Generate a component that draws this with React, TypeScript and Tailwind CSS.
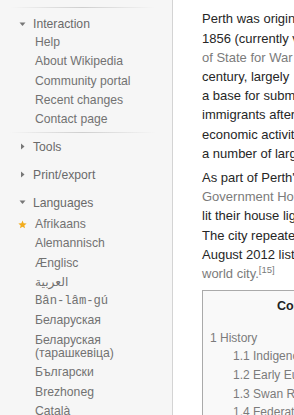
import React from "react";

const Down = () => (
  <svg width="7" height="7" viewBox="0 0 7 7" className="mr-[7px] shrink-0">
    <polygon points="0.5,1.5 6.5,1.5 3.5,5" fill="#777" />
  </svg>
);

const Right = () => (
  <svg width="7" height="7" viewBox="0 0 7 7" className="mr-[7px] shrink-0">
    <polygon points="2,0.5 5.5,3.5 2,6.5" fill="#777" />
  </svg>
);

const Sep = () => (
  <div className="h-px ml-[10px] w-[145px] bg-linear-to-r from-[#f6f6f6] via-[#cfcfcf] to-[#f6f6f6]" />
);

function Heading({ open, label }: { open?: boolean; label: string }) {
  return (
    <div className="flex items-center h-[16px] pl-[19px] text-[12.2px] text-[#6a6a6a]">
      {open ? <Down /> : <Right />}
      {label}
    </div>
  );
}

function Item({ children, className = "" }: { children: React.ReactNode; className?: string }) {
  return (
    <div className={`pl-[35px] pr-2 py-[3px] leading-[13.3px] text-[12.2px] text-[#727272] ${className}`}>
      {children}
    </div>
  );
}

const interaction = ["Help", "About Wikipedia", "Community portal", "Recent changes", "Contact page"];

function Sidebar() {
  return (
    <div className="w-[173px] shrink-0 bg-[#f6f6f6] border-r border-[#d4d4d4] flex flex-col">
      <div className="mt-[7px]">
        <Sep />
      </div>
      <div className="mt-[8px]">
        <Heading open label="Interaction" />
      </div>
      <div className="mt-px">
        {interaction.map((t) => (
          <Item key={t}>{t}</Item>
        ))}
      </div>
      <div className="mt-[2.5px]">
        <Sep />
      </div>
      <div className="mt-[6px] mb-[7px]">
        <Heading label="Tools" />
      </div>
      <Sep />
      <div className="mt-[5px] mb-[6px]">
        <Heading label="Print/export" />
      </div>
      <Sep />
      <div className="mt-[6px] mb-[4px]">
        <Heading open label="Languages" />
      </div>
      <div className="relative">
        <svg width="9" height="9" viewBox="0 0 24 24" className="absolute left-[18px] top-[5px]">
          <polygon
            points="12,1.5 15,8.8 23,9.3 16.9,14.5 18.8,22.3 12,18 5.2,22.3 7.1,14.5 1,9.3 9,8.8"
            fill="#f2ac1c"
          />
        </svg>
        <Item>Afrikaans</Item>
      </div>
      <Item>Alemannisch</Item>
      <Item>Ænglisc</Item>
      <Item className="text-[10px]">
        <span dir="rtl" className="font-['DejaVu_Sans',sans-serif]">العربية</span>
      </Item>
      <Item className="font-['Liberation_Mono',monospace] text-[9.8px]">Bân-lâm-gú</Item>
      <Item>Беларуская</Item>
      <Item>
        Беларуская
        <br />
        (тарашкевіца)
      </Item>
      <Item>Български</Item>
      <Item>Brezhoneg</Item>
      <Item>Català</Item>
    </div>
  );
}

const L = ({ children }: { children: React.ReactNode }) => (
  <span className="text-[#7b7b7b]">{children}</span>
);

const para1 = [
  <>Perth was originally founded by Captain James Stirling in 1829 as the administrative centre</>,
  <>1856 (currently vested in the City of Perth). It was named after Perth in Scotland by the Secretary</>,
  <L>of State for War and the Colonies, Sir George Murray.</L>,
  <>century, largely</>,
  <>a base for submarines operating in the Indian Ocean and an influx of</>,
  <>immigrants after the war led to rapid population growth. More recent growth has been driven by</>,
  <>economic activity in the mining and petroleum industries, which has seen</>,
  <>a number of large companies headquartered in the city.</>,
];

const para2 = [
  <>As part of Perth's role in the Friendship 7 mission in 1962, residents and</>,
  <L>Government House</L>,
  <>lit their house lights and streetlights as John Glenn passed overhead.</>,
  <>The city repeated the act in 1998. The Globalization and World Cities</>,
  <>August 2012 listed Perth as a Beta world city, making it a</>,
  <>
    <L>world city.</L>
    <sup className="text-[#7b7b7b] text-[9.5px]">[15]</sup>
  </>,
];

const toc = [
  { n: "1", t: "History", sub: false },
  { n: "1.1", t: "Indigenous history", sub: true },
  { n: "1.2", t: "Early European sightings", sub: true },
  { n: "1.3", t: "Swan River Colony", sub: true },
  { n: "1.4", t: "Federation and beyond", sub: true },
];

function Content() {
  return (
    <div className="flex-1 min-w-0 overflow-hidden bg-white pl-[29px] text-[13px] text-[#262626]">
      <div className="pt-[9.4px] leading-[19.2px] whitespace-nowrap">
        {para1.map((l, i) => (
          <div key={i}>{l}</div>
        ))}
      </div>
      <div className="mt-[5px] leading-[19.2px] whitespace-nowrap">
        {para2.map((l, i) => (
          <div key={i} className="h-[19.2px]">{l}</div>
        ))}
      </div>
      <div className="mt-[6.4px] w-[204px] border border-[#aaaaaa] bg-[#f9f9f9] pt-[6.5px] whitespace-nowrap">
        <div className="text-center font-bold text-[12.5px] leading-[19px] text-[#222]">Contents</div>
        <div className="mt-[12.5px] pl-[7px] text-[12px] leading-[18.7px] text-[#7b7b7b]">
          {toc.map((e) => (
            <div key={e.n} className={e.sub ? "pl-[23px]" : ""}>
              {e.n} {e.t}
            </div>
          ))}
        </div>
      </div>
    </div>
  );
}

export default function App() {
  return (
    <div className="flex w-[294px] h-[415px] overflow-hidden font-['Liberation_Sans',Arial,sans-serif]">
      <Sidebar />
      <Content />
    </div>
  );
}
